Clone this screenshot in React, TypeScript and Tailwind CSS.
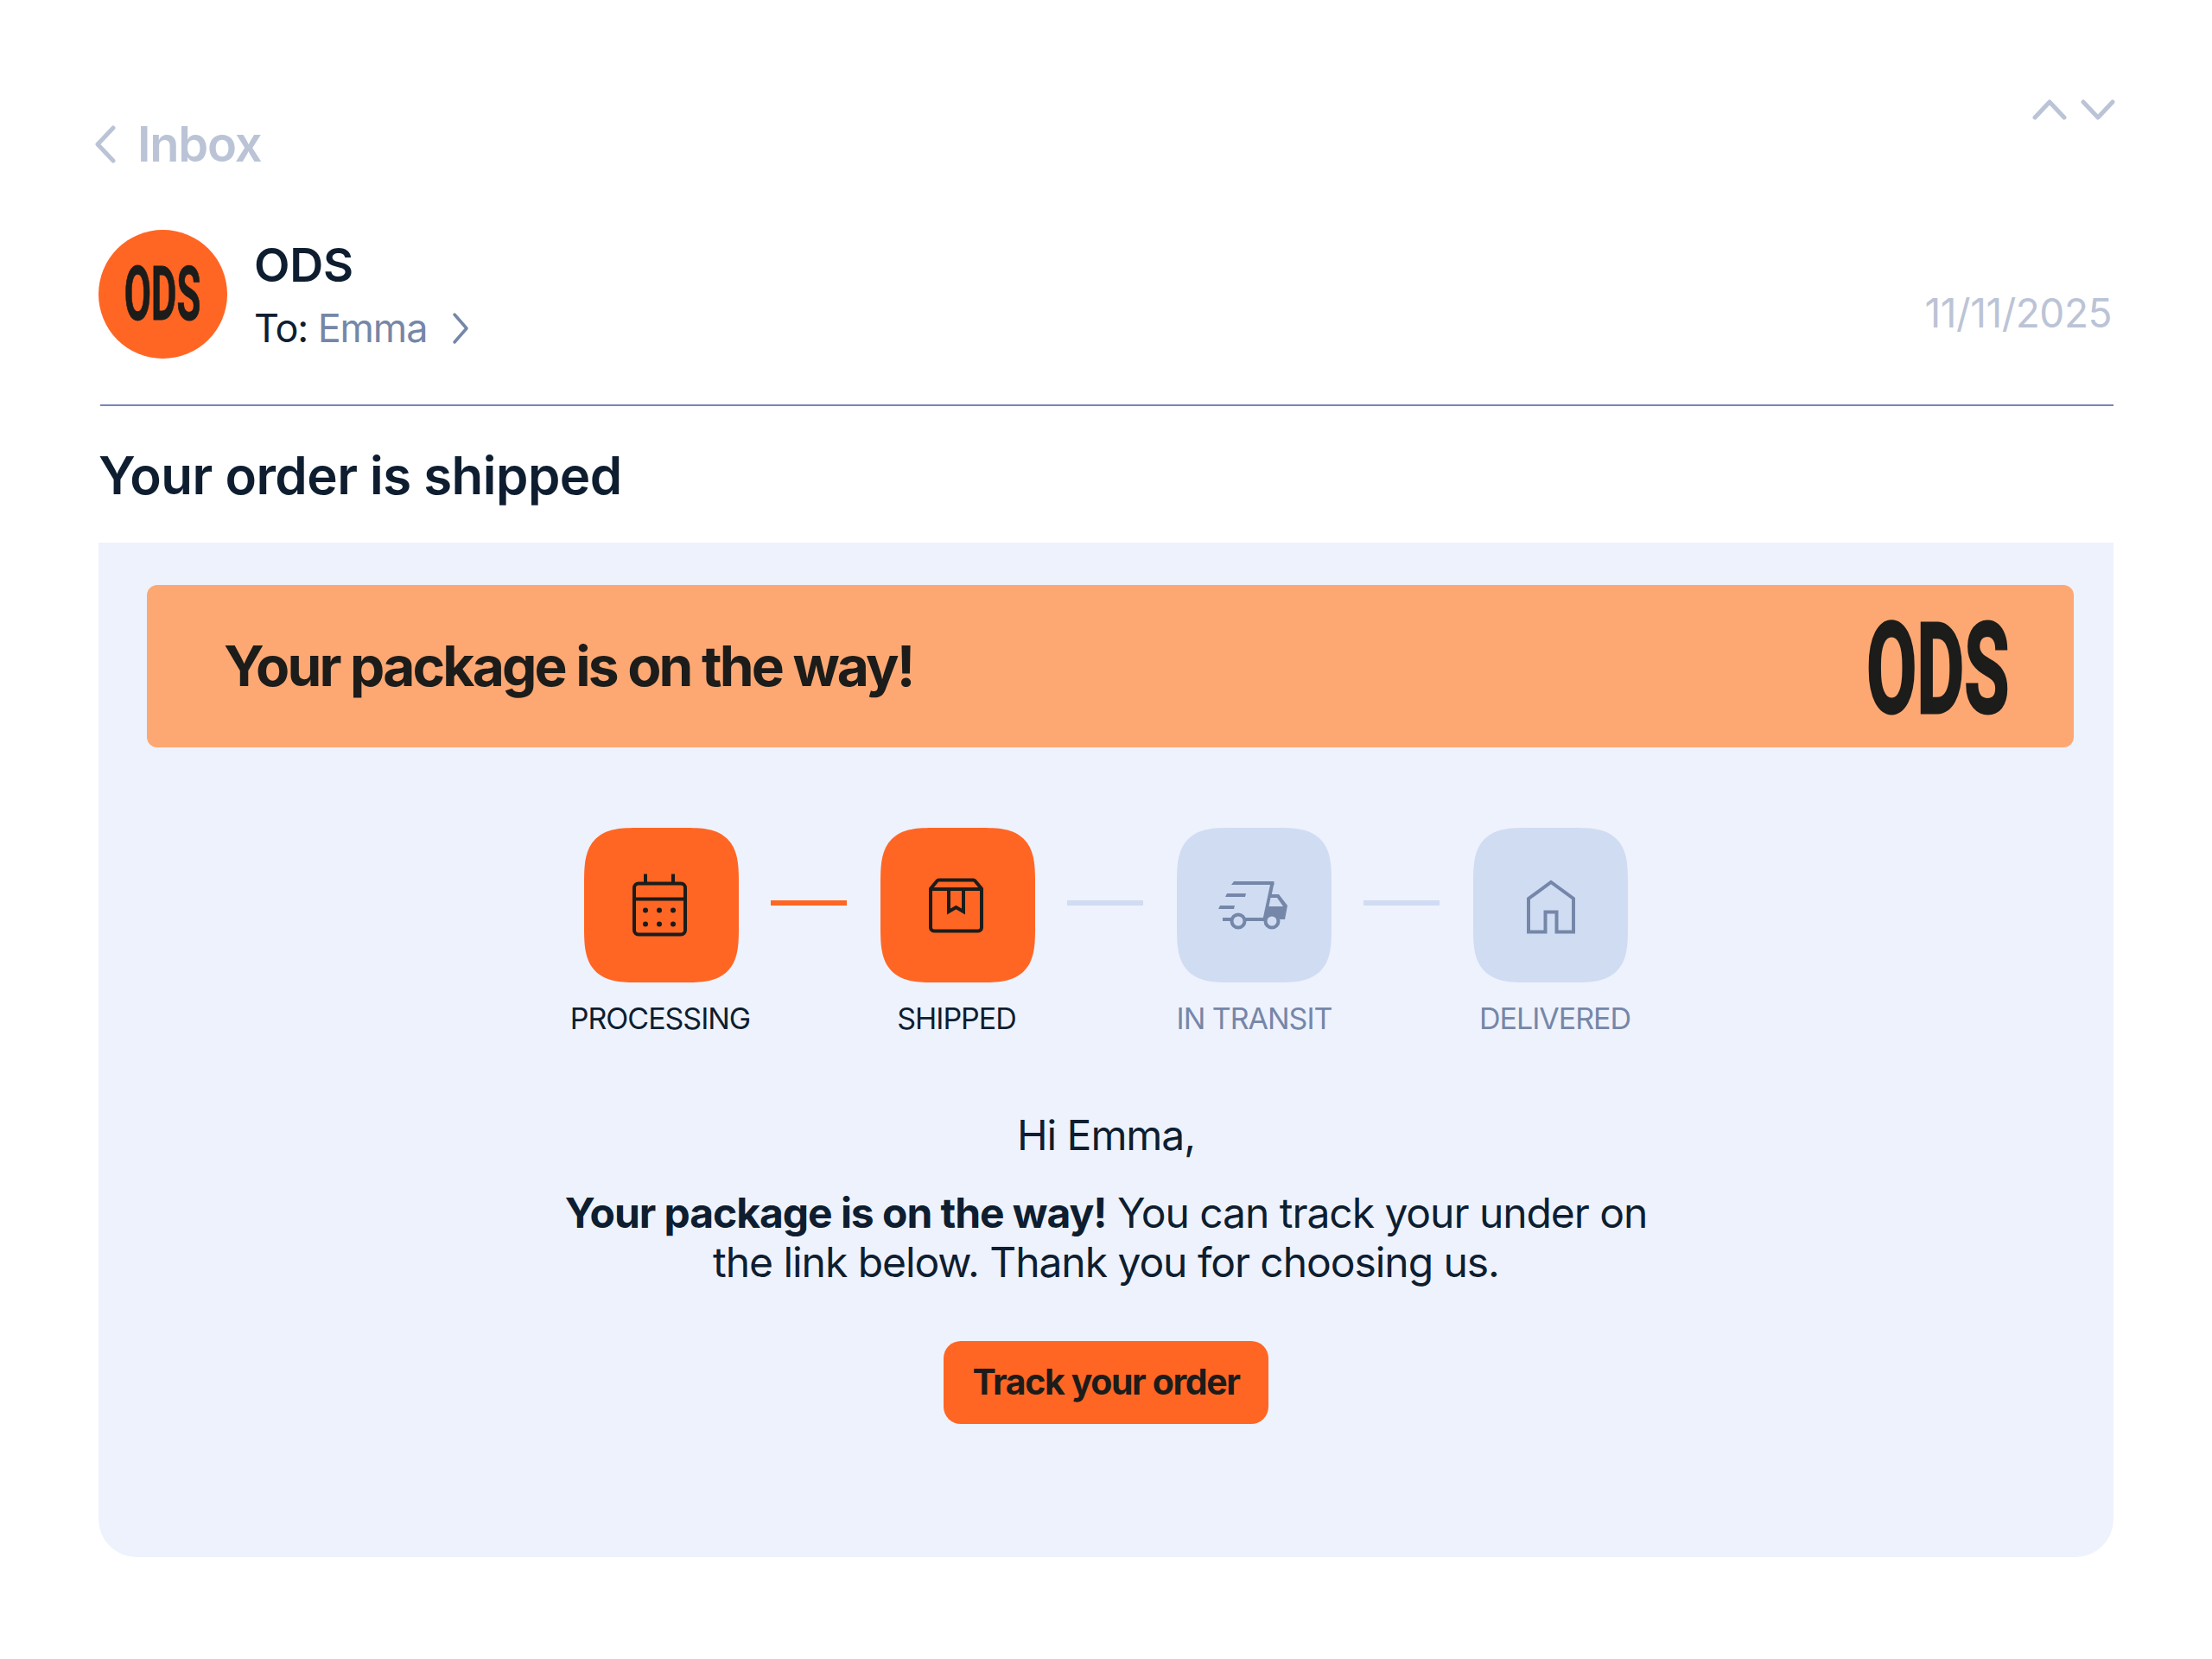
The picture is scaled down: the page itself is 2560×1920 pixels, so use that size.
import React from 'react';

const SLATE = '#7587a8';
const INK = '#1c1c1a';

const CalendarIcon = () => (
  <svg width="70" height="80" viewBox="1 0 70 80" fill="none" stroke={INK} strokeWidth="4">
    <rect x="4" y="14.500" width="59" height="59" rx="5" />
    <path d="M4 32.500H63M17 3.500V14M49 3.500V14" />
    <g fill={INK} stroke="none">
      <circle cx="17" cy="45.500" r="3" />
      <circle cx="33" cy="45.500" r="3" />
      <circle cx="49" cy="45.500" r="3" />
      <circle cx="17" cy="61.500" r="3" />
      <circle cx="33" cy="61.500" r="3" />
      <circle cx="49" cy="61.500" r="3" />
    </g>
  </svg>
);

const BoxIcon = () => (
  <svg width="70" height="70" viewBox="2 0 70 70" fill="none" stroke={INK} strokeWidth="4">
    <path d="M5 15.500V60.500a4 4 0 0 0 4 4H60a4 4 0 0 0 4-4V15.500L56.500 6.500a3 3 0 0 0-2-1H14.500a3 3 0 0 0-2 1Z" strokeLinejoin="round" />
    <path d="M5 16H64" />
    <path d="M26 16V42L34.500 37L43 42V16" />
  </svg>
);

const TruckIcon = () => (
  <svg width="90" height="60" viewBox="2 0 90 60" fill="none" stroke={SLATE} strokeWidth="4">
    <path d="M23 2L20 6H69.500V2Z" fill={SLATE} stroke="none" />
    <path d="M67.500 4L58.500 46" />
    <path d="M15 16H37L36 20H13Z M7 30H24L23 34H5Z" fill={SLATE} stroke="none" />
    <path d="M10 46H21M35 46H58" />
    <circle cx="28" cy="48" r="7.500" />
    <circle cx="67" cy="48" r="7.500" />
    <path d="M64 17H75L85 30L82 46H76C73 39 62 39 58 45Z" fill={SLATE} stroke="none" />
    <path d="M65.500 21H73L80 31H63.500Z" fill="#d0dcf2" stroke="none" />
  </svg>
);

const HouseIcon = () => (
  <svg width="60" height="66" viewBox="1 0 60 66" fill="none" stroke={SLATE} strokeWidth="4">
    <path d="M24.500 63.500H5V25L31 6L57 25V63.500H37.500V40.500H24.500Z" />
  </svg>
);

const OdsMark = ({ big }: { big?: boolean }) => (
  <div className={big ? 'flex h-[104px] w-[159px] items-center justify-center' : 'flex h-[62px] w-[90px] items-center justify-center'}>
    <span
      className={
        big
          ? "mt-[10px] inline-block whitespace-nowrap font-['Roboto',sans-serif] text-[146px] leading-none font-bold text-[#1c1c1a] scale-x-[0.58] [-webkit-text-stroke:3px_#1c1c1a]"
          : "inline-block whitespace-nowrap font-['Roboto',sans-serif] text-[87px] leading-none font-bold text-[#1c1c1a] scale-x-[0.52] [-webkit-text-stroke:1px_#1c1c1a]"
      }
    >
      ODS
    </span>
  </div>
);

const Step = ({ label, active, icon, labelClass }: { label: string; active?: boolean; icon: React.ReactNode; labelClass?: string }) => (
  <div className="flex w-[179px] flex-col items-center">
    <div
      className={
        active
          ? 'flex h-[179px] w-[179px] items-center justify-center rounded-[64px] bg-[#ff6624] [corner-shape:superellipse(1.6)]'
          : 'flex h-[179px] w-[179px] items-center justify-center rounded-[64px] bg-[#d0dcf2] [corner-shape:superellipse(1.6)]'
      }
    >
      {icon}
    </div>
    <div
      className={`mt-[21px] whitespace-nowrap text-[34px] leading-[42px] tracking-[-0.03em] ${active ? 'text-[#0e1e30]' : 'text-[#7587a8]'} ${labelClass ?? ''}`}
    >
      {label}
    </div>
  </div>
);

const Connector = ({ active }: { active?: boolean }) => (
  <div className={active ? 'mt-[84px] mr-[39px] ml-[37px] h-[6px] w-[88px] bg-[#ff6624]' : 'mt-[84px] mr-[39px] ml-[37px] h-[6px] w-[88px] bg-[#d0dcf2]'} />
);

export default function App() {
  return (
    <div className="h-[1920px] w-[2560px] bg-white pt-[115px] pr-[114px] pl-[114px] font-['Inter',sans-serif] text-[#0e1e30]">
      {/* Barra superior */}
      <div className="flex items-start justify-between">
        <div className="mt-[19px] flex h-[66px] items-center gap-[24px]">
          <svg width="26" height="44" viewBox="0 0 26 44" fill="none" stroke="#bbc4d6" strokeWidth="5" strokeLinecap="round" strokeLinejoin="round" className="-ml-[5px]">
            <path d="M22 3L4 22L22 41" />
          </svg>
          <span className="text-[56px] leading-[66px] font-semibold tracking-[-0.022em] text-[#bbc4d6]">Inbox</span>
        </div>
        <div className="-mr-[2px] flex gap-[16px]">
          <svg width="40" height="24" viewBox="0 0 40 24" fill="none" stroke="#bbc4d6" strokeWidth="5" strokeLinecap="round" strokeLinejoin="round">
            <path d="M3 21L20 3L37 21" />
          </svg>
          <svg width="40" height="24" viewBox="0 0 40 24" fill="none" stroke="#bbc4d6" strokeWidth="5" strokeLinecap="round" strokeLinejoin="round">
            <path d="M3 3L20 21L37 3" />
          </svg>
        </div>
      </div>

      {/* Remitente */}
      <div className="mt-[66px] flex items-center">
        <div className="flex h-[149px] w-[149px] items-center justify-center rounded-full bg-[#ff6624]">
          <OdsMark />
        </div>
        <div className="ml-[31px] flex-1">
          <div className="text-[54px] leading-[66px] font-semibold tracking-[-0.005em]">ODS</div>
          <div className="mt-[12px] flex items-center text-[45px] leading-[56px] tracking-[-0.025em]">
            <span>To:&nbsp;</span>
            <span className="text-[#7587a8]">Emma</span>
            <svg width="24" height="38" viewBox="0 0 24 38" fill="none" stroke="#7587a8" strokeWidth="3.500" strokeLinecap="round" strokeLinejoin="round" className="ml-[26px]">
              <path d="M6 3L20 19L6 35" />
            </svg>
          </div>
        </div>
        <div className="mt-[43px] mr-[2px] text-[46px] leading-[56px] tracking-[-0.01em] text-[#bbc4d6]">11/11/2025</div>
      </div>

      <div className="mt-[53px] ml-[2px] h-[2px] bg-[#7587b5]" />

      <h1 className="mt-[44px] text-[60px] leading-[72px] font-semibold tracking-[-0.009em]">Your order is shipped</h1>

      {/* Cuerpo del correo */}
      <div className="mt-[42px] rounded-b-[44px] bg-[#eef2fd] pt-[49px] pb-[154px]">
        <div className="mr-[46px] ml-[56px] flex h-[188px] items-center justify-between rounded-[12px] bg-[#fda873] pr-[78px] pl-[89px]">
          <span className="text-[64px] leading-none font-bold tracking-[-0.044em] text-[#1c1c1a]">Your package is on the way!</span>
          <OdsMark big />
        </div>

        <div className="mt-[93px] flex items-start justify-center">
          <Step label="PROCESSING" active icon={<CalendarIcon />} labelClass="pr-[3px]" />
          <Connector active />
          <Step label="SHIPPED" active icon={<BoxIcon />} labelClass="pr-[3px]" />
          <Connector />
          <Step label="IN TRANSIT" icon={<TruckIcon />} />
          <Connector />
          <Step label="DELIVERED" icon={<HouseIcon />} labelClass="pl-[10px]" />
        </div>

        <div className="mt-[85px] text-center text-[48px] leading-[57px] tracking-[-0.022em]">
          <p>Hi Emma,</p>
          <p className="mt-[33px]">
            <span className="font-bold">Your package is on the way!</span> You can track your under on
            <br />
            the link below. Thank you for choosing us.
          </p>
        </div>

        <div className="mt-[63px] flex justify-center">
          <div className="flex h-[96px] w-[376px] items-center justify-center rounded-[20px] bg-[#ff6624] text-[41px] font-bold tracking-[-0.034em] text-[#1c1c1a]">
            Track your order
          </div>
        </div>
      </div>
    </div>
  );
}
